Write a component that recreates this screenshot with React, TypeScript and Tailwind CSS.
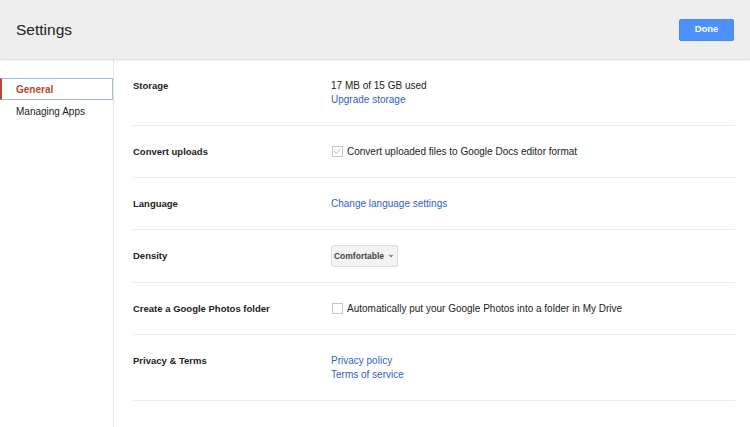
import { ChevronDown, Check } from "lucide-react";

const font = { fontFamily: '"Liberation Sans", Arial, sans-serif' };

const Row = ({
  label,
  children,
  tall,
  h = "h-[52px]",
}: {
  label: string;
  children: React.ReactNode;
  tall?: boolean;
  h?: string;
}) => (
  <div className={`flex border-b border-[#ebebeb] ${tall ? "pt-[19px] pb-[18px]" : `${h} items-center`}`}>
    <div className="w-[198px] shrink-0 text-[9.5px] leading-[14px] font-bold text-[#222]">{label}</div>
    <div className="flex-1 text-[10px] leading-[14px] text-[#222]">{children}</div>
  </div>
);

const Link = ({ children }: { children: React.ReactNode }) => (
  <div className="text-[#2f5fbf]">{children}</div>
);

const Checkbox = ({ checked }: { checked?: boolean }) => (
  <span className="mr-[4px] ml-[1px] flex h-[11px] w-[11px] items-center justify-center border border-[#c6c6c6] bg-white">
    {checked && <Check className="h-[9px] w-[9px] text-[#888]" strokeWidth={1.5} />}
  </span>
);

export default function App() {
  return (
    <div className="flex h-[427px] w-full flex-col bg-white" style={font}>
      <header className="relative z-10 flex h-[60px] shrink-0 items-center justify-between border-b border-[#e2e2e2] bg-[#eeeeee] pl-4 pr-4 shadow-[0_1px_2px_rgba(0,0,0,0.06)]">
        <h1 className="text-[15.5px] text-[#222]">Settings</h1>
        <button className="h-[22px] w-[55px] rounded-[2px] border border-[#4688f1] bg-[#4d90fe] text-[9.5px] font-bold text-white">
          Done
        </button>
      </header>
      <div className="flex flex-1">
        <nav className="w-[114px] shrink-0 border-r border-[#e5e5e5] pt-[18px] text-[10px]">
          <div className="flex h-[22px] items-center border border-[#9fbde9] border-l-[2px] border-l-[#c2452d] pl-[14px] font-bold text-[#c2452d]">
            General
          </div>
          <div className="flex h-[22px] items-center pl-4 text-[#222]">Managing Apps</div>
        </nav>
        <main className="flex-1 pl-[19px] pr-[15px]">
          <Row label="Storage" tall>
            <div>17 MB of 15 GB used</div>
            <Link>Upgrade storage</Link>
          </Row>
          <Row label="Convert uploads">
            <div className="flex items-center">
              <Checkbox checked />
              Convert uploaded files to Google Docs editor format
            </div>
          </Row>
          <Row label="Language">
            <Link>Change language settings</Link>
          </Row>
          <Row label="Density" h="h-[53px]">
            <button className="flex h-[22px] w-[67px] items-center justify-center gap-[3px] rounded-[2px] border border-[#dcdcdc] bg-[#f3f3f3] text-[8.5px] font-bold text-[#444]">
              Comfortable
              <ChevronDown className="h-[8px] w-[8px] text-[#888]" fill="#888" strokeWidth={3} />
            </button>
          </Row>
          <Row label="Create a Google Photos folder">
            <div className="flex items-center">
              <Checkbox />
              Automatically put your Google Photos into a folder in My Drive
            </div>
          </Row>
          <Row label="Privacy & Terms" tall>
            <Link>Privacy policy</Link>
            <Link>Terms of service</Link>
          </Row>
        </main>
      </div>
    </div>
  );
}
